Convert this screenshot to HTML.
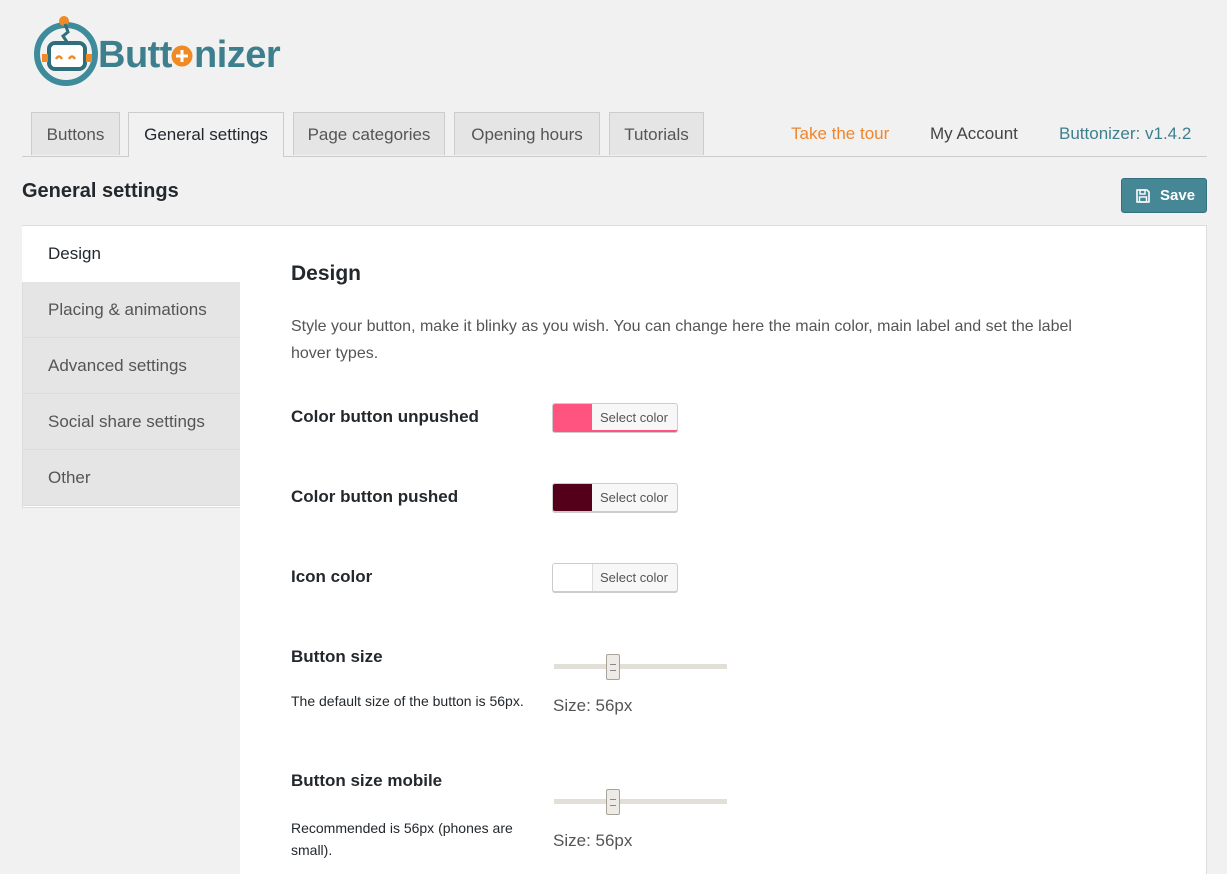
<!DOCTYPE html>
<html style="overflow:hidden;height:874px"><head><style>
body{margin:0;width:1227px;height:874px;background:#f1f1f1;font-family:"Liberation Sans",sans-serif;color:#23282d;overflow:hidden;position:relative}
.a{position:absolute}
.tab{position:absolute;top:112px;height:43px;border:1px solid #ccc;border-bottom:none;background:#e5e5e5;color:#555;font-size:17px;line-height:44px;text-align:center;box-sizing:border-box}
.side{position:absolute;left:22px;width:218px;height:56px;border-bottom:1px solid #ddd;background:#e5e5e5;color:#555;font-size:17px;line-height:56px;padding-left:25px;box-sizing:border-box;border-left:1px solid #ddd}
.lbl{position:absolute;left:291px;font-size:17px;font-weight:bold;color:#23282d}
.cp{position:absolute;left:552px;width:126px;height:29px;border:1px solid #ccc;border-radius:3px;box-shadow:0 1px 0 #ccc;background:#f7f7f7;box-sizing:border-box;overflow:hidden}
.cp i{position:absolute;left:0;top:0;width:39px;height:28px}
.cp span{position:absolute;left:47px;top:6px;font-size:13px;color:#555}
.sl{position:absolute;left:554px;width:173px;height:5px;background:#e2dfd9}
.th{position:absolute;width:12px;height:24px;border:1px solid #a8a29a;background:#eeeae5;top:-10px;left:52px;border-radius:2px}
.th:after{content:"";position:absolute;left:3px;top:9px;width:6px;height:5px;border-top:1px solid #888;border-bottom:1px solid #888}
.sz{position:absolute;left:553px;font-size:17px;color:#555}
.desc{position:absolute;left:291px;font-size:14px;color:#23282d}
</style></head><body>
<svg class="a" style="left:30px;top:14px" width="260" height="72" viewBox="0 0 260 72">
<circle cx="36" cy="40" r="29" fill="none" stroke="#3e8b9b" stroke-width="6"/>
<circle cx="34" cy="7" r="5" fill="#f08a24"/>
<path d="M35 10 l3 8 -5 4 4 6" stroke="#2f6e7c" stroke-width="3" fill="none"/>
<rect x="19" y="29" width="36" height="26" rx="6" fill="#fff" stroke="#2f6e7c" stroke-width="4"/>
<path d="M26 45 q3-5 6 0 M39 45 q3-5 6 0" stroke="#f08a24" stroke-width="2.5" fill="none"/>
<rect x="12" y="40" width="6" height="8" fill="#f08a24"/><rect x="56" y="40" width="6" height="8" fill="#f08a24"/>
<text x="68" y="53" font-family="Liberation Sans" font-weight="bold" font-size="38" fill="#3e7f8e" letter-spacing="-0.5">Butt</text>
<circle cx="152" cy="42" r="10.5" fill="#f08a24"/><path d="M152 36v12M146 42h12" stroke="#fff" stroke-width="3"/>
<text x="164" y="53" font-family="Liberation Sans" font-weight="bold" font-size="38" fill="#3e7f8e" letter-spacing="-0.5">nizer</text>
</svg>
<div class="a" style="left:22px;top:156px;width:1185px;height:1px;background:#ccc"></div>
<div class="tab" style="left:31px;width:89px">Buttons</div>
<div class="tab" style="left:128px;width:156px;height:45px;background:#f1f1f1;color:#23282d">General settings</div>
<div class="tab" style="left:293px;width:152px">Page categories</div>
<div class="tab" style="left:454px;width:146px">Opening hours</div>
<div class="tab" style="left:609px;width:95px">Tutorials</div>
<div class="a" style="left:791px;top:124px;font-size:17px;color:#f0852d">Take the tour</div>
<div class="a" style="left:930px;top:124px;font-size:17px;color:#444">My Account</div>
<div class="a" style="left:1059px;top:124px;font-size:17px;color:#3e7f8e">Buttonizer: v1.4.2</div>
<div class="a" style="left:22px;top:180px;font-size:20px;font-weight:bold;color:#23282d">General settings</div>
<div class="a" style="left:1121px;top:178px;width:86px;height:35px;background:#468795;border:1px solid #33707d;border-radius:3px;box-sizing:border-box;color:#fff;font-weight:bold;font-size:15px;line-height:33px">
<svg class="a" style="left:14px;top:10px" width="14" height="14" viewBox="0 0 14 14"><path d="M1 1h10l2 2v10H1z" fill="none" stroke="#fff" stroke-width="1.6"/><rect x="4" y="1" width="5" height="4" fill="none" stroke="#fff" stroke-width="1.4"/><rect x="3.5" y="8" width="7" height="5" fill="none" stroke="#fff" stroke-width="1.4"/></svg>
<span class="a" style="left:38px">Save</span></div>
<div class="a" style="left:22px;top:225px;width:1185px;height:649px;background:#fff;border:1px solid #ddd;border-bottom:none;box-sizing:border-box"></div>
<div class="side" style="top:226px;background:#fff;color:#23282d;border:none;padding-left:26px">Design</div>
<div class="side" style="top:282px">Placing &amp; animations</div>
<div class="side" style="top:338px">Advanced settings</div>
<div class="side" style="top:394px">Social share settings</div>
<div class="side" style="top:450px">Other</div>
<div class="a" style="left:22px;top:507px;width:218px;height:367px;background:#f1f1f1;border-top:1px solid #ddd"></div>
<div class="a" style="left:291px;top:313px;width:800px;font-size:16px;line-height:27px;color:#555">Style your button, make it blinky as you wish. You can change here the main color, main label and set the label hover types.</div>
<div class="a" style="left:291px;top:262px;font-size:21px;font-weight:bold;color:#23282d">Design</div>
<div class="lbl" style="top:407px">Color button unpushed</div>
<div class="cp" style="top:403px;border-bottom:2px solid #ff5480"><i style="background:#ff5480"></i><span>Select color</span></div>
<div class="lbl" style="top:487px">Color button pushed</div>
<div class="cp" style="top:483px"><i style="background:#55001a"></i><span>Select color</span></div>
<div class="lbl" style="top:567px">Icon color</div>
<div class="cp" style="top:563px"><i style="background:#fff;border-right:1px solid #ddd"></i><span>Select color</span></div>
<div class="lbl" style="top:647px">Button size</div>
<div class="desc" style="top:693px">The default size of the button is 56px.</div>
<div class="sl" style="top:664px"><div class="th"></div></div>
<div class="sz" style="top:696px">Size: 56px</div>
<div class="lbl" style="top:771px">Button size mobile</div>
<div class="desc" style="top:817px;line-height:22px;width:250px">Recommended is 56px (phones are small).</div>
<div class="sl" style="top:799px"><div class="th"></div></div>
<div class="sz" style="top:831px">Size: 56px</div>
</body></html>
